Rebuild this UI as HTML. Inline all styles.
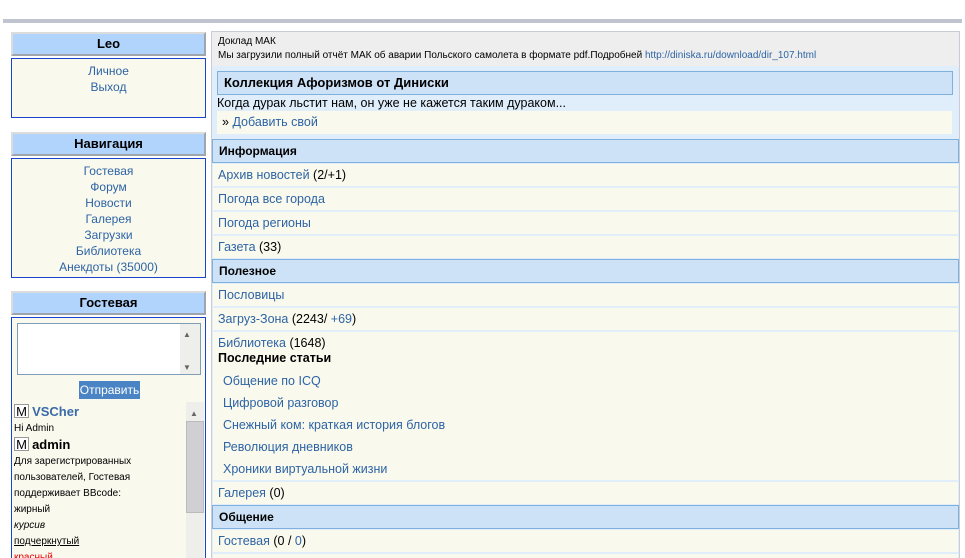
<!DOCTYPE html>
<html style="overflow:hidden;height:558px"><head><meta charset="utf-8"><style>
*{margin:0;padding:0;box-sizing:border-box}
body{width:965px;height:558px;overflow:hidden;background:#fff;font-family:"Liberation Sans","DejaVu Sans",sans-serif;font-size:12px;color:#000;position:relative}
a{color:#2e64a4;text-decoration:none}
.abs{position:absolute}
.hd{position:absolute;left:11px;width:195px;height:24px;background:#b0d4fc;border:2px solid #dcdcdc;border-right-color:#a0a4ac;border-bottom-color:#a0a4ac;text-align:center;font-weight:bold;font-size:13px;line-height:20px}
.bx{position:absolute;left:11px;width:195px;background:#f9f9ee;border:1px solid #1a44cc;text-align:center;font-size:12px;line-height:16px}
.rh{position:absolute;left:212px;width:747px;height:24px;background:#cde1f7;border:1px solid #80b0dc;font-weight:bold;font-size:12px;line-height:22px;padding-left:6px}
.it{position:absolute;left:213px;width:745px;height:22px;background:#f9f9ee;font-size:12.5px;line-height:22px;padding-left:5px}
.sub{position:absolute;left:223px;font-size:12.5px;line-height:22px}
</style></head><body>
<div class="abs" style="left:3px;top:19px;width:959px;height:4px;background:#c0c4cf"></div>

<div class="hd" style="top:32px">Leo</div>
<div class="bx" style="top:58px;height:60px;padding-top:4px"><a>Личное</a><br><a>Выход</a></div>

<div class="hd" style="top:132px">Навигация</div>
<div class="bx" style="top:158px;height:120px;padding-top:4px"><a>Гостевая</a><br><a>Форум</a><br><a>Новости</a><br><a>Галерея</a><br><a>Загрузки</a><br><a>Библиотека</a><br><a>Анекдоты (35000)</a></div>

<div class="hd" style="top:291px">Гостевая</div>
<div class="bx" style="top:317px;height:241px;border-bottom:none;overflow:hidden;text-align:left">
 <div class="abs" style="left:5px;top:5px;width:184px;height:52px;background:#fff;border:1px solid #7f9db9"></div>
 <div class="abs" style="left:168px;top:6px;width:20px;height:50px;background:#eeeeea"></div>
 <div class="abs" style="left:171px;top:9px;font-size:8px;color:#666">▲</div>
 <div class="abs" style="left:171px;top:42px;font-size:8px;color:#666">▼</div>
 <div class="abs" style="left:67px;top:63px;width:61px;height:18px;background:#4a84c4;color:#fff;font-size:12px;line-height:18px;text-align:center">Отправить</div>
 <div class="abs" style="left:174px;top:84px;width:18px;height:170px;background:#eeeeea"></div>
 <div class="abs" style="left:174px;top:103px;width:18px;height:92px;background:#d0d0d4;border:1px solid #bbb"></div>
 <div class="abs" style="left:178px;top:88px;font-size:8px;color:#666">▲</div>
 <div class="abs" style="left:2px;top:86px;font-size:11px;line-height:16px;width:170px">
  <div><span style="display:inline-block;width:15px;height:14px;border:1px solid #999;background:#fff;text-align:center;line-height:13px;font-size:13px">M</span> <b style="color:#3a6aa8;font-size:13px">VSCher</b></div>
  <div style="font-size:10px">Hi Admin</div>
  <div><span style="display:inline-block;width:15px;height:14px;border:1px solid #999;background:#fff;text-align:center;line-height:13px;font-size:13px">M</span> <b style="font-size:13px">admin</b></div>
  <div style="font-size:10px;line-height:16px">Для зарегистрированных<br>пользователей, Гостевая<br>поддерживает BBcode:<br>жирный<br><i>курсив</i><br><u>подчеркнутый</u><br><span style="color:#e00">красный</span></div>
 </div>
</div>

<div class="abs" style="left:211px;top:31px;width:749px;height:527px;border:1px solid #c8ccd4;border-bottom:none;background:#e0eefc"></div>
<div class="abs" style="left:212px;top:32px;width:747px;height:34px;background:#eeeeee;font-size:10px;line-height:14px;padding:3px 0 0 6px">Доклад МАК<br>Мы загрузили полный отчёт МАК об аварии Польского самолета в формате pdf.Подробней <a>http://diniska.ru/download/dir_107.html</a></div>
<div class="rh" style="left:217px;width:736px;top:71px;font-size:13px">Коллекция Афоризмов от Диниски</div>
<div class="abs" style="left:217px;top:96px;font-size:12.5px;line-height:15px">Когда дурак льстит нам, он уже не кажется таким дураком...</div>
<div class="abs" style="left:217px;top:111px;width:735px;height:23px;background:#f9f9ee;line-height:23px;padding-left:5px;font-size:12.5px">» <a>Добавить свой</a></div>

<div class="rh" style="top:139px">Информация</div>
<div class="it" style="top:164px"><a>Архив новостей</a> (2/+1)</div>
<div class="it" style="top:188px"><a>Погода все города</a></div>
<div class="it" style="top:212px"><a>Погода регионы</a></div>
<div class="it" style="top:236px"><a>Газета</a> (33)</div>
<div class="rh" style="top:259px">Полезное</div>
<div class="it" style="top:284px"><a>Пословицы</a></div>
<div class="it" style="top:308px"><a>Загруз-Зона</a> (2243/ <a>+69</a>)</div>
<div class="it" style="top:332px;height:148px;line-height:22px"><a>Библиотека</a> (1648)</div>
<div class="abs" style="left:218px;top:351px;font-weight:bold;font-size:12.5px">Последние статьи</div>
<div class="sub" style="top:370px"><a>Общение по ICQ</a></div>
<div class="sub" style="top:392px"><a>Цифровой разговор</a></div>
<div class="sub" style="top:414px"><a>Снежный ком: краткая история блогов</a></div>
<div class="sub" style="top:436px"><a>Революция дневников</a></div>
<div class="sub" style="top:458px"><a>Хроники виртуальной жизни</a></div>
<div class="it" style="top:482px"><a>Галерея</a> (0)</div>
<div class="rh" style="top:505px">Общение</div>
<div class="it" style="top:530px"><a>Гостевая</a> (0 / <a>0</a>)</div>
<div class="it" style="top:554px;height:4px"></div>
</body></html>
